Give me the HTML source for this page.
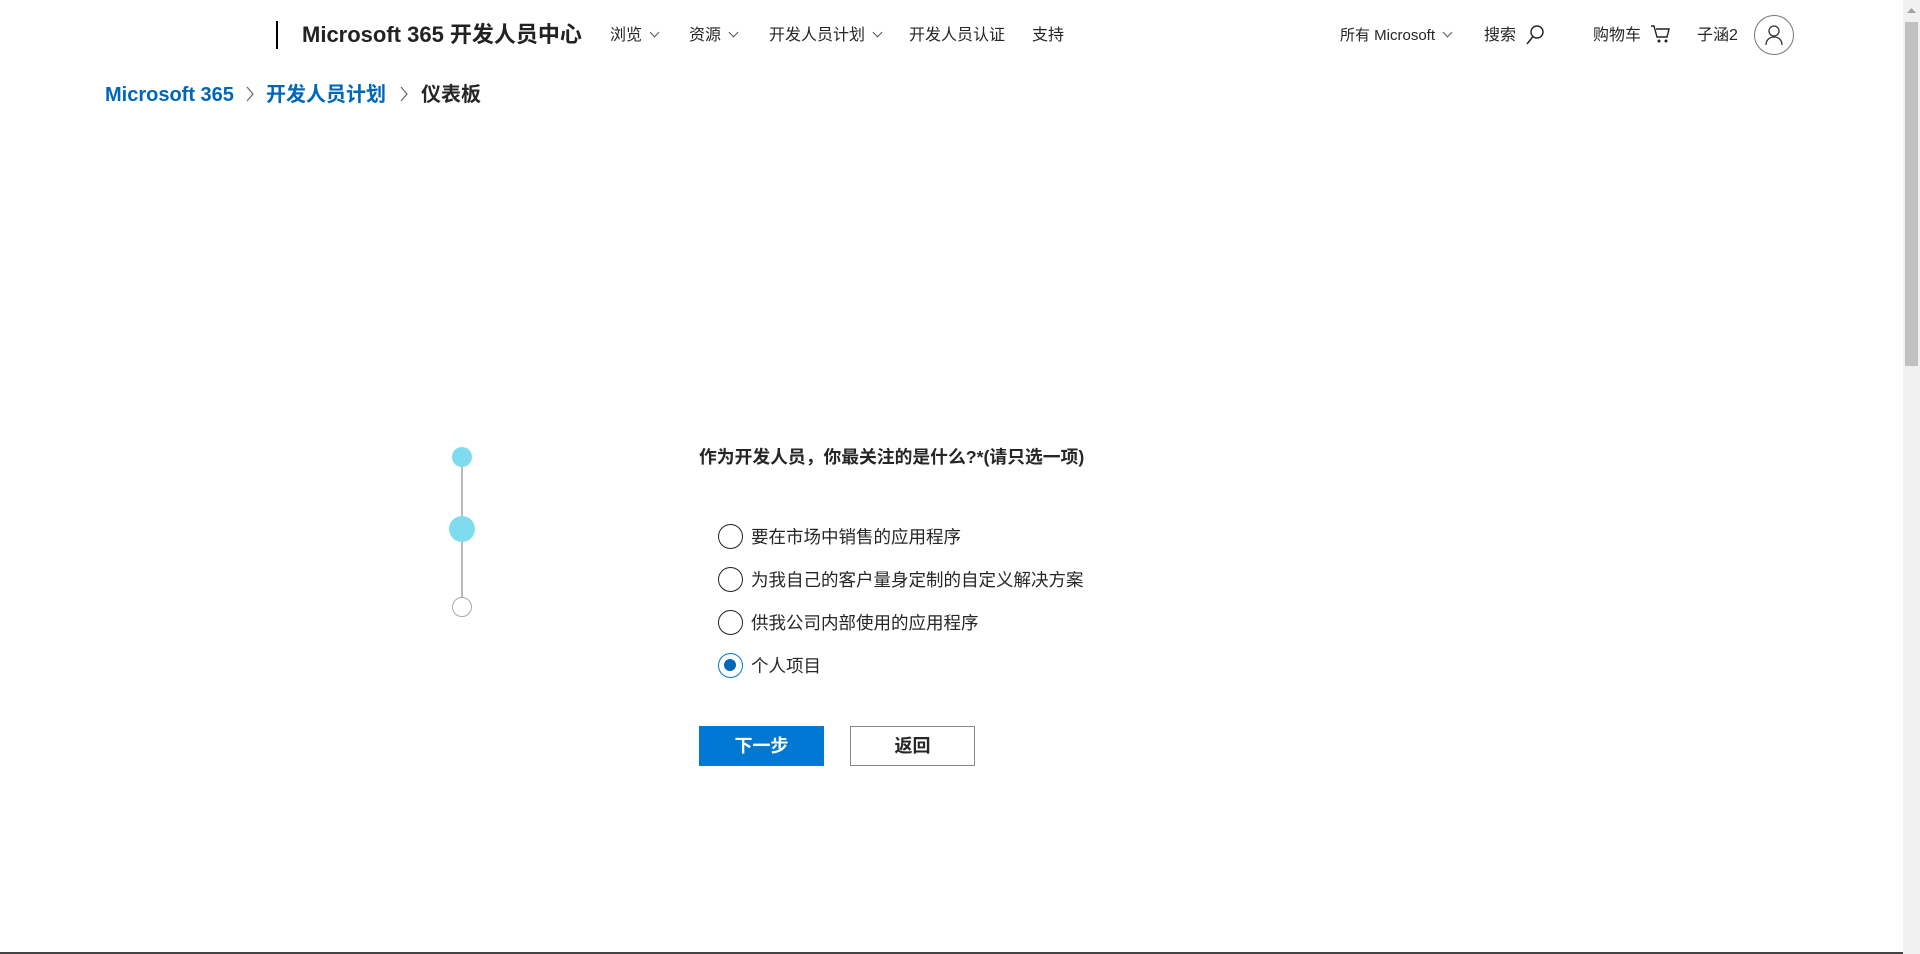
<!DOCTYPE html>
<html><head><meta charset="utf-8">
<style>
*{margin:0;padding:0;box-sizing:border-box}
body{width:1920px;height:954px;background:#fff;position:relative;overflow:hidden;font-family:"Liberation Sans","Noto Sans CJK SC",sans-serif;color:#262626}
.a{position:absolute;white-space:nowrap}
.nav{font-size:16px;top:25px;line-height:22px;color:#262626}
.chev{display:inline-block;width:7px;height:7px;border-right:1.2px solid #555;border-bottom:1.2px solid #555;transform:rotate(45deg);margin-left:9px;position:relative;top:-4px}
.bc{font-size:20px;font-weight:bold;top:82px;line-height:26px}
.opt{font-size:17.5px;line-height:24px;left:751px}
.rad{position:absolute;left:718px;width:25px;height:25px;border:1.5px solid #222;border-radius:50%}
</style></head><body>
<div class="a" style="left:276px;top:21px;width:2px;height:28px;background:#000"></div>
<div class="a" style="left:302px;top:21px;font-size:22px;line-height:28px;font-weight:bold;color:#222">Microsoft 365 开发人员中心</div>
<div class="a nav" style="left:610px">浏览<span class="chev"></span></div>
<div class="a nav" style="left:689px">资源<span class="chev"></span></div>
<div class="a nav" style="left:769px">开发人员计划<span class="chev"></span></div>
<div class="a nav" style="left:909px">开发人员认证</div>
<div class="a nav" style="left:1032px">支持</div>
<div class="a nav" style="left:1340px;font-size:15px">所有 Microsoft<span class="chev"></span></div>
<div class="a nav" style="left:1484px">搜索</div>
<svg class="a" style="left:1525px;top:24px" width="20" height="22" viewBox="0 0 20 22"><circle cx="12" cy="8" r="6" fill="none" stroke="#222" stroke-width="1.4"/><line x1="8" y1="12.5" x2="2" y2="20" stroke="#222" stroke-width="1.5"/></svg>
<div class="a nav" style="left:1593px">购物车</div>
<svg class="a" style="left:1650px;top:24px" width="22" height="20" viewBox="0 0 22 20"><path d="M1 2h3l3 11h10l2-8H6" fill="none" stroke="#222" stroke-width="1.4"/><circle cx="9" cy="17" r="1.5" fill="#222"/><circle cx="16" cy="17" r="1.5" fill="#222"/></svg>
<div class="a nav" style="left:1697px">子涵2</div>
<div class="a" style="left:1754px;top:15px;width:40px;height:40px;border:1.3px solid #777;border-radius:50%"></div>
<svg class="a" style="left:1762px;top:23px" width="24" height="24" viewBox="0 0 24 24"><circle cx="12" cy="8" r="5" fill="none" stroke="#333" stroke-width="1.3"/><path d="M4 22c0-5 3.5-8 8-8s8 3 8 8" fill="none" stroke="#333" stroke-width="1.3"/></svg>

<div class="a bc" style="left:105px;color:#0067b8;">Microsoft 365</div>
<svg class="a" style="left:245px;top:86px" width="10" height="16"><path d="M2 1l6 7-6 7" fill="none" stroke="#666" stroke-width="1.2"/></svg>
<div class="a bc" style="left:266px;color:#0067b8">开发人员计划</div>
<svg class="a" style="left:399px;top:86px" width="10" height="16"><path d="M2 1l6 7-6 7" fill="none" stroke="#666" stroke-width="1.2"/></svg>
<div class="a bc" style="left:421px;color:#262626">仪表板</div>

<div class="a" style="left:461px;top:457px;width:2px;height:150px;background:#bbb"></div>
<div class="a" style="left:452px;top:447px;width:20px;height:20px;border-radius:50%;background:#7fdcee"></div>
<div class="a" style="left:449px;top:516px;width:26px;height:26px;border-radius:50%;background:#7fdcee"></div>
<div class="a" style="left:452px;top:597px;width:20px;height:20px;border-radius:50%;background:#fff;border:1px solid #aaa"></div>

<div class="a" style="left:699px;top:445px;font-size:17.8px;line-height:24px;font-weight:bold;color:#262626">作为开发人员，你最关注的是什么?*(请只选一项)</div>
<div class="rad" style="top:524px"></div><div class="a opt" style="top:525px">要在市场中销售的应用程序</div>
<div class="rad" style="top:567px"></div><div class="a opt" style="top:568px">为我自己的客户量身定制的自定义解决方案</div>
<div class="rad" style="top:610px"></div><div class="a opt" style="top:611px">供我公司内部使用的应用程序</div>
<div class="rad" style="top:653px;border-color:#0078d4"><div style="position:absolute;left:5px;top:5px;width:12px;height:12px;border-radius:50%;background:#0067b8"></div></div><div class="a opt" style="top:654px">个人项目</div>

<div class="a" style="left:699px;top:726px;width:125px;height:40px;background:#0078d4;color:#fff;font-size:18px;font-weight:bold;text-align:center;line-height:40px">下一步</div>
<div class="a" style="left:850px;top:726px;width:125px;height:40px;border:1px solid #888;color:#262626;font-size:18px;font-weight:bold;text-align:center;line-height:38px">返回</div>

<div class="a" style="left:1903px;top:0;width:17px;height:954px;background:#f1f1f1"></div>
<div class="a" style="left:1905px;top:22px;width:13px;height:344px;background:#c1c1c1"></div>
<svg class="a" style="left:1905px;top:6px" width="13" height="8"><path d="M2 7l4.5-5 4.5 5z" fill="#a3a3a3"/></svg>
<div class="a" style="left:0;top:952px;width:1903px;height:2px;background:#444"></div>
</body></html>
